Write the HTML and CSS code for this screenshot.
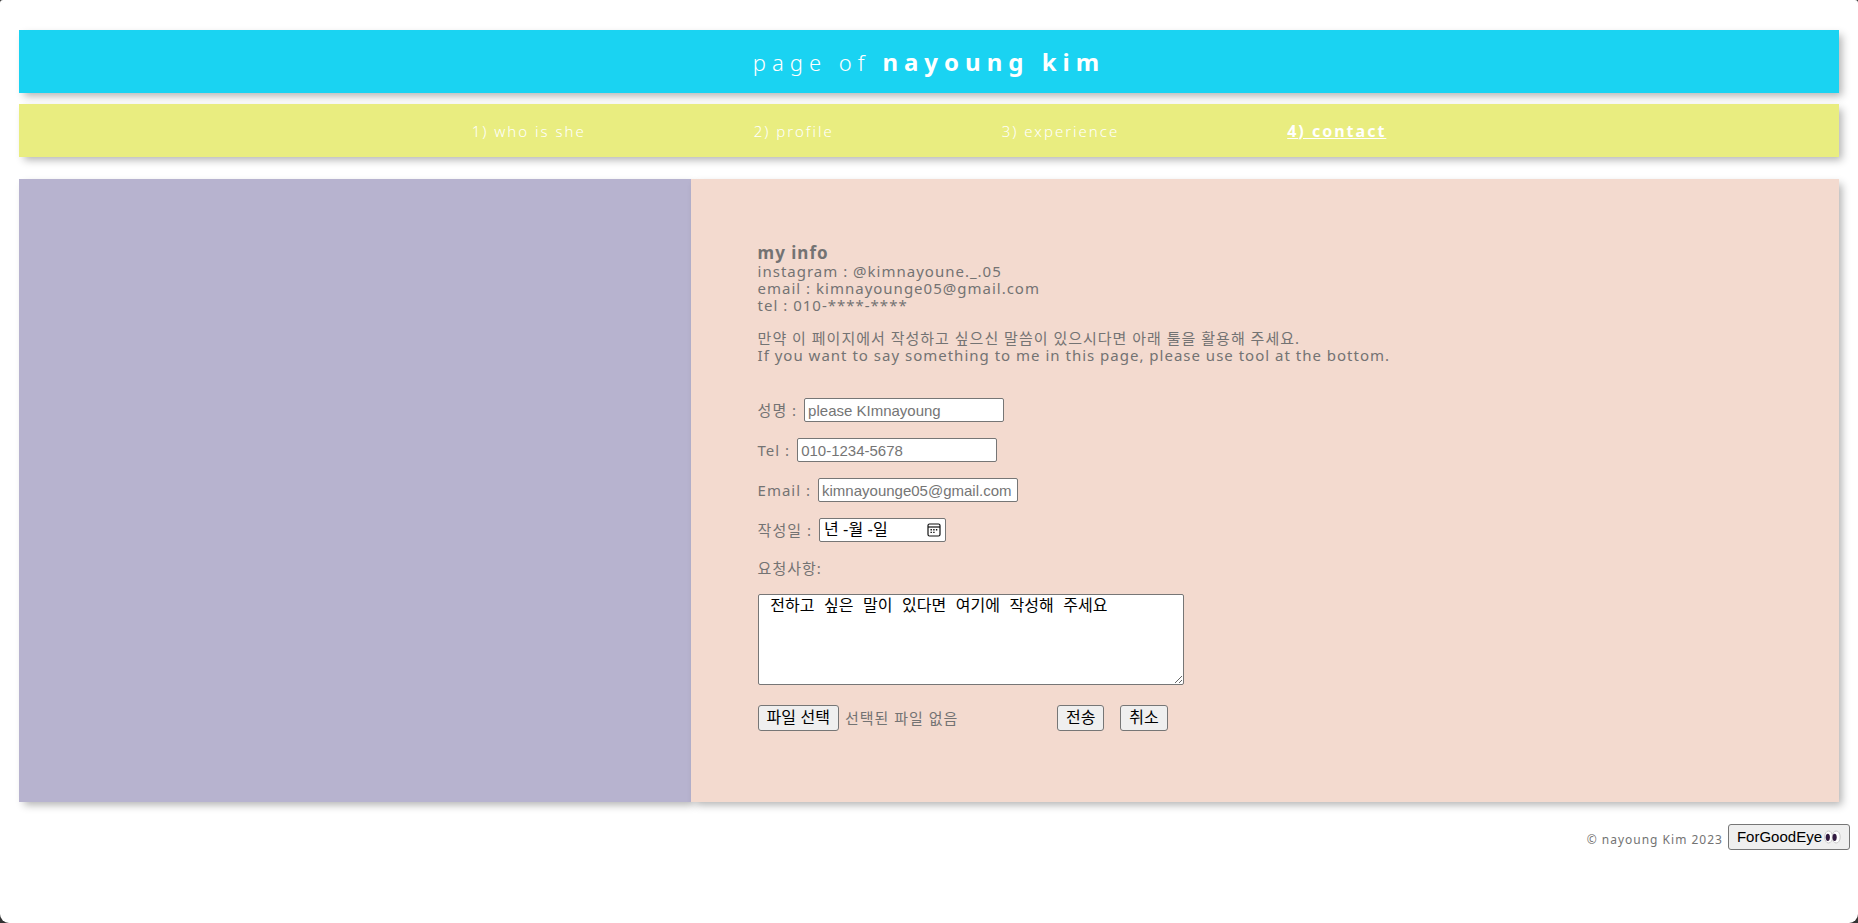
FILE: index.html
```html
<!DOCTYPE html>
<html lang="ko">
<head>
<meta charset="utf-8">
<title>page of nayoung kim</title>
<link rel="stylesheet" href="styles.css">
</head>
<body>
<div class="page">
  <header class="banner"><h1 class="title">page of <strong>nayoung kim</strong></h1></header>
  <nav class="menu">
    <a href="#who">1) who is she</a>
    <a href="#profile">2) profile</a>
    <a href="#experience">3) experience</a>
    <a href="#contact" class="current">4) contact</a>
  </nav>
  <main class="content">
    <aside class="side"></aside>
    <section class="info">
      <h2 class="heading">my info</h2>
      <p class="text">instagram : @kimnayoune._.05<br>email : kimnayounge05@gmail.com<br>tel : 010-****-****</p>
      <p class="text">만약 이 페이지에서 작성하고 싶으신 말씀이 있으시다면 아래 툴을 활용해 주세요.<br>If you want to say something to me in this page, please use tool at the bottom.</p>
      <form class="form">
        <div class="row"><label for="name">성명 :</label><input class="field" id="name" type="text" placeholder="please KImnayoung"></div>
        <div class="row"><label for="tel">Tel :</label><input class="field" id="tel" type="tel" placeholder="010-1234-5678"></div>
        <div class="row"><label for="email">Email :</label><input class="field" id="email" type="email" placeholder="kimnayounge05@gmail.com"></div>
        <div class="row"><label for="date">작성일 :</label><span class="date"><input class="date-text" id="date" type="text" value="년 -월 -일"><button class="date-pick" type="button" aria-label="달력"><svg width="14" height="14" viewBox="0 0 14 14"><rect x="1" y="1" width="12" height="12" rx="1.5" fill="none" stroke="#111" stroke-width="1.2"/><path d="M1 4h12" stroke="#111" stroke-width="1.2"/><path d="M6.2 6h1.4v1.4H6.2zM8.9 6h1.4v1.4H8.9zM3.5 6h1.4v1.4H3.5zM3.5 8.7h1.4v1.4H3.5zM6.2 8.7h1.4v1.4H6.2z" fill="#111"/></svg></button></span></div>
        <label class="request" for="message">요청사항:</label>
        <textarea class="message" id="message"> 전하고 싶은 말이 있다면 여기에 작성해 주세요</textarea>
        <div class="actions">
          <button class="btn" type="button">파일 선택</button>
          <span class="file-name">선택된 파일 없음</span>
          <button class="btn" type="submit">전송</button>
          <button class="btn cancel" type="reset">취소</button>
        </div>
      </form>
    </section>
  </main>
  <footer class="footer">
    <span class="copyright">© nayoung Kim 2023</span>
    <button class="btn eye" type="button">ForGoodEye<svg width="17" height="14" viewBox="0 0 17 14"><ellipse cx="4.6" cy="7" rx="4" ry="6" fill="#fff" stroke="#c8c8c8"/><ellipse cx="12.2" cy="7" rx="4" ry="6" fill="#fff" stroke="#c8c8c8"/><ellipse cx="3.8" cy="7.3" rx="2.1" ry="3.6" fill="#321b41"/><ellipse cx="10.6" cy="7.3" rx="2.1" ry="3.6" fill="#321b41"/></svg></button>
  </footer>
</div>
</body>
</html>
```
FILE: styles.css
```css
* { box-sizing: border-box; }
html { background: #333; }
body {
  margin: 0;
  color: #737373;
  font: 15px/17px "Noto Sans", "Noto Sans CJK KR", sans-serif;
  letter-spacing: 1px;
}
.page {
  min-height: 100vh;
  padding: 30px 19px 0;
  background: #fff;
  border-radius: 3px 3px 9px 9px;
}
.banner, .menu, .side, .info { box-shadow: 4px 4px 8px -1px rgba(0, 0, 0, 0.3); }
.banner { padding: 16px 0 15px; background: #1ad3f2; color: #fff; text-align: center; }
.title { margin: 0; font-size: 22px; line-height: 32px; font-weight: 300; letter-spacing: 6px; }
.title strong { font-size: 24px; line-height: 24px; font-weight: 700; }
.menu {
  display: flex;
  justify-content: center;
  gap: 168px;
  margin-top: 11px;
  padding: 19px 0 17px;
  background: #e9ed80;
  letter-spacing: 2px;
}
.menu a { color: #fff; text-decoration: none; font-weight: 300; }
.menu a.current { font-size: 16px; font-weight: 700; text-decoration: underline; }
.content { display: grid; grid-template-columns: 36.9fr 63.1fr; margin-top: 22px; }
.side { background: #b7b3cf; }
.info { padding: 64px 67px 71px; background: #f3dacf; }
.heading { margin: 0; font-size: 17px; line-height: 20px; font-weight: 700; }
.text { margin: 0 0 16px; }
.form { margin-top: 34px; }
.row { display: flex; align-items: center; gap: 7px; margin-bottom: 16px; }
.field {
  width: 200px;
  height: 24px;
  padding: 1px 3px;
  border: 1px solid #767676;
  border-radius: 2px;
  background: #fff;
  font: 15px "Liberation Sans", sans-serif;
}
.field::placeholder { color: #757575; }
.date {
  display: flex;
  align-items: center;
  width: 127px;
  height: 24px;
  padding: 0 4px;
  border: 1px solid #767676;
  border-radius: 2px;
  background: #fff;
}
.date-text { flex: 1; min-width: 0; padding: 0; border: 0; color: #000; font: 16px/20px "Liberation Sans", "Noto Sans CJK KR", sans-serif; }
.date-pick { display: flex; padding: 0; border: 0; background: none; }
.request { display: block; line-height: 20px; }
.message {
  display: block;
  width: 426px;
  height: 91px;
  margin: 16px 0 20px;
  padding: 2px;
  border: 1px solid #767676;
  border-radius: 2px;
  color: #000;
  font: 16px/20px "Liberation Mono", "Noto Sans CJK KR", monospace;
}
.actions { display: flex; align-items: center; }
.btn {
  height: 26px;
  padding: 0 8px;
  border: 1px solid #767676;
  border-radius: 3px;
  background: #efefef;
  color: #000;
  font: 16px/20px "Liberation Sans", "Noto Sans CJK KR", sans-serif;
}
.file-name { width: 212px; margin-left: 6px; }
.cancel { margin-left: 16px; }
.footer {
  display: flex;
  justify-content: flex-end;
  align-items: center;
  gap: 5px;
  margin: 22px -11px 0 0;
}
.copyright { padding-top: 4px; font-size: 12px; }
.eye { display: flex; align-items: center; gap: 2px; font-size: 15px; }
```
